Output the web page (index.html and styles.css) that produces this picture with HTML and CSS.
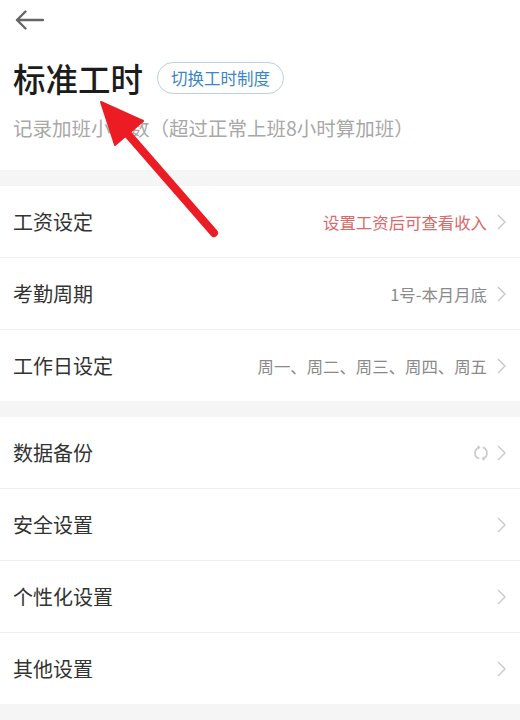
FILE: index.html
```html
<!DOCTYPE html>
<html lang="zh">
<head>
<meta charset="utf-8">
<link rel="stylesheet" href="styles.css">
</head>
<body>
<div class="page">
  <header class="header">
    <div class="nav">
      <svg class="back" width="30" height="20" viewBox="0 0 30 20"><path d="M29 10H3M11.5 1.5L3 10l8.5 8.5" fill="none" stroke="#666" stroke-width="2.4" stroke-linecap="round" stroke-linejoin="round"/></svg>
    </div>
    <div class="title-row">
      <h1 class="title">标准工时</h1>
      <span class="badge">切换工时制度</span>
    </div>
    <p class="subtitle">记录加班小时数（超过正常上班8小时算加班）</p>
  </header>

  <div class="band"></div>
  <section class="group">
    <div class="row"><span class="label">工资设定</span><span class="right"><span class="value red">设置工资后可查看收入</span><svg class="chev" width="9" height="16" viewBox="0 0 9 16"><path d="M1 1l7 7-7 7" fill="none" stroke="#c8c8c8" stroke-width="1.4"/></svg></span></div>
    <div class="row"><span class="label">考勤周期</span><span class="right"><span class="value">1号-本月月底</span><svg class="chev" width="9" height="16" viewBox="0 0 9 16"><path d="M1 1l7 7-7 7" fill="none" stroke="#c8c8c8" stroke-width="1.4"/></svg></span></div>
    <div class="row"><span class="label">工作日设定</span><span class="right"><span class="value">周一、周二、周三、周四、周五</span><svg class="chev" width="9" height="16" viewBox="0 0 9 16"><path d="M1 1l7 7-7 7" fill="none" stroke="#c8c8c8" stroke-width="1.4"/></svg></span></div>
  </section>
  <div class="band"></div>
  <section class="group">
    <div class="row"><span class="label">数据备份</span><span class="right"><svg class="sync" width="16" height="16" viewBox="0 0 16 16"><path d="M6.2 2.3A6 6 0 0 0 6.2 13.7M9.8 13.7A6 6 0 0 0 9.8 2.3" fill="none" stroke="#cccccc" stroke-width="1.8"/><path d="M4.6 0.9l1.9 1.4-1.6 1.8M11.4 15.1l-1.9-1.4 1.6-1.8" fill="none" stroke="#cccccc" stroke-width="1.4"/></svg><svg class="chev" width="9" height="16" viewBox="0 0 9 16"><path d="M1 1l7 7-7 7" fill="none" stroke="#c8c8c8" stroke-width="1.4"/></svg></span></div>
    <div class="row"><span class="label">安全设置</span><span class="right"><svg class="chev" width="9" height="16" viewBox="0 0 9 16"><path d="M1 1l7 7-7 7" fill="none" stroke="#c8c8c8" stroke-width="1.4"/></svg></span></div>
    <div class="row"><span class="label">个性化设置</span><span class="right"><svg class="chev" width="9" height="16" viewBox="0 0 9 16"><path d="M1 1l7 7-7 7" fill="none" stroke="#c8c8c8" stroke-width="1.4"/></svg></span></div>
    <div class="row"><span class="label">其他设置</span><span class="right"><svg class="chev" width="9" height="16" viewBox="0 0 9 16"><path d="M1 1l7 7-7 7" fill="none" stroke="#c8c8c8" stroke-width="1.4"/></svg></span></div>
  </section>
  <div class="band tail"></div>

  <svg class="annot" width="520" height="720" viewBox="0 0 520 720">
    <line x1="126" y1="132" x2="214" y2="233" stroke="#ec1c24" stroke-width="8" stroke-linecap="round"/>
    <polygon points="101,102 115,145 143,121" fill="#ec1c24" stroke="#ec1c24" stroke-width="2" stroke-linejoin="round"/>
  </svg>
</div>
</body>
</html>
```

FILE: styles.css
```css
* { box-sizing: border-box; }
html, body { margin: 0; padding: 0; background: #fff; }
body {
  font-family: "Noto Sans CJK SC", "Noto Sans", sans-serif;
  color: #333;
  width: 520px;
  height: 720px;
  overflow: hidden;
}
.page { position: relative; width: 520px; height: 720px; }

.header { padding: 0 13px; height: 170px; }
.nav { height: 40px; display: flex; align-items: center; padding-left: 1px; }
.back { display: block; }

.title-row {
  margin-top: 18px;
  height: 40px;
  display: flex;
  align-items: center;
  gap: 14px;
}
.title {
  margin: 0;
  font-size: 32.5px;
  font-weight: 500;
  line-height: 40px;
  color: #1c1c1c;
}
.badge {
  height: 32px;
  padding: 0 13px;
  border: 1px solid #bcd0df;
  border-radius: 16px;
  color: #3b86c4;
  font-size: 16.5px;
  line-height: 30px;
  white-space: nowrap;
}
.subtitle {
  margin: 16px 0 0;
  font-size: 19.5px;
  line-height: 28px;
  color: #a8a8a8;
  white-space: nowrap;
}

.band { height: 16px; background: #f5f5f5; }
.band.tail { height: 20px; }

.group { background: #fff; }
.row {
  height: 72px;
  display: flex;
  align-items: center;
  justify-content: space-between;
  padding: 0 14px 0 13px;
  border-bottom: 1px solid #f0f0f0;
}
.row:last-child { height: 71px; border-bottom: none; }
.label { font-size: 20px; color: #333; }
.right { display: flex; align-items: center; gap: 10px; }
.value { font-size: 16.4px; color: #8a8a8a; }
.value.red { color: #d9696b; }
.chev, .sync { display: block; }
.sync { margin-right: -2px; }

.annot { position: absolute; left: 0; top: 0; pointer-events: none; }
```
